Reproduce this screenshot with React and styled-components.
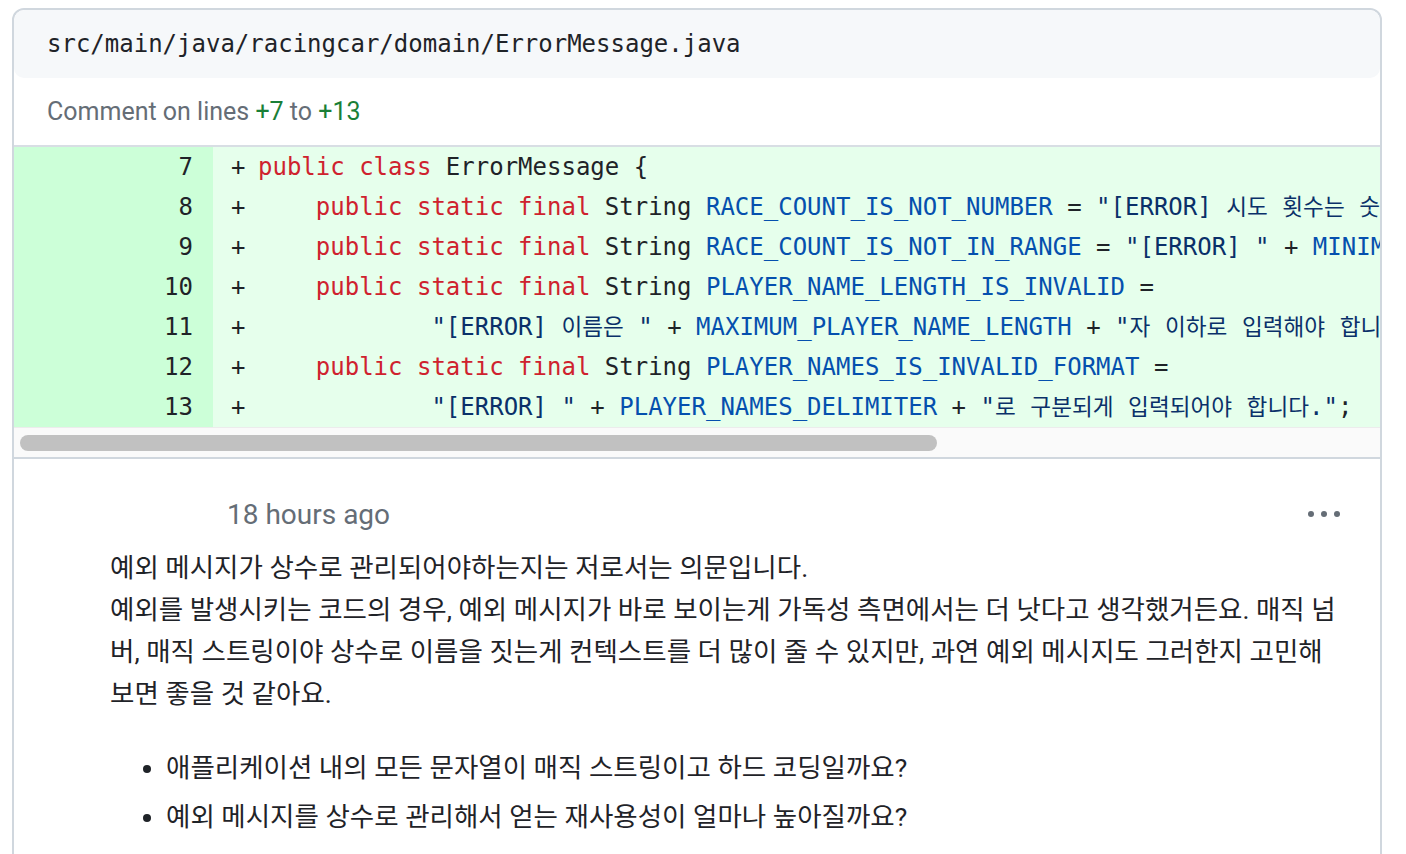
import React from 'react';
import styled, { createGlobalStyle } from 'styled-components';

const GlobalStyle = createGlobalStyle`
  body {
    margin: 0;
    background: #fff;
    font-family: Roboto, "Noto Sans CJK KR", sans-serif;
    color: #1f2328;
  }
`;

const Page = styled.div`
  padding: 8px 0 0 12px;
`;

const Card = styled.div`
  width: 1370px;
  box-sizing: border-box;
  border: 2px solid #d0d7de;
  border-radius: 12px;
  overflow: hidden;
  background: #fff;
`;

const FileHeader = styled.div`
  height: 68px;
  display: flex;
  align-items: center;
  padding: 0 33px;
  background: #f6f8fa;
  border-radius: 10px;
  font-family: "DejaVu Sans Mono", monospace;
  font-size: 24px;
  color: #1f2328;
`;

const LinesNote = styled.div`
  height: 67px;
  display: flex;
  align-items: center;
  padding: 0 33px;
  font-size: 25px;
  color: #656d76;
`;

const LineRef = styled.span`
  color: #1a7f37;
`;

const Diff = styled.div`
  border-top: 2px solid #d8dee4;
  border-bottom: 2px solid #d0d7de;
  overflow: hidden;
  font-family: "DejaVu Sans Mono", "Noto Sans CJK KR", monospace;
  font-size: 24px;
`;

const Row = styled.div`
  display: flex;
  height: 40px;
  line-height: 40px;
`;

const LineNum = styled.div`
  flex: 0 0 199px;
  box-sizing: border-box;
  padding-right: 20px;
  text-align: right;
  background: #ccffd8;
  color: #1f2328;
`;

const CodeCell = styled.div`
  flex: 1;
  display: flex;
  padding-left: 18px;
  background: #e6ffec;
  white-space: pre;
  color: #1f2328;
`;

const Marker = styled.span`
  flex: 0 0 27px;
`;

const Kw = styled.span`
  color: #cf222e;
`;

const Const = styled.span`
  color: #0550ae;
`;

const Str = styled.span`
  color: #0a3069;
`;

// hangul inside code is narrower than the mono cell in the original
const Ko = styled.span`
  font-size: 22.6px;
  word-spacing: 1px;
`;

const ScrollTrack = styled.div`
  height: 29px;
  display: flex;
  align-items: center;
  padding-left: 6px;
  background: #fafafa;
  border-top: 1px solid #ececec;
`;

const ScrollThumb = styled.div`
  width: 917px;
  height: 16px;
  border-radius: 8px;
  background: #c1c1c1;
`;

const Comment = styled.div`
  padding: 34px 34px 40px 0;
`;

const CommentHeader = styled.div`
  display: flex;
  align-items: center;
  justify-content: space-between;
  height: 42px;
  padding-left: 213px;
  padding-right: 6px;
`;

const TimeAgo = styled.span`
  font-size: 28px;
  color: #656d76;
`;

const KebabButton = styled.button`
  border: none;
  background: none;
  padding: 0;
  display: flex;
  color: #656d76;
  cursor: pointer;
`;

const Body = styled.div`
  margin: 12px 0 0 96px;
  width: 1236px;
  font-size: 26.5px;
  line-height: 42px;
  color: #1f2328;

  p {
    margin: 0 0 32px;
  }
`;

const List = styled.ul`
  margin: 0;
  padding-left: 56px;

  li + li {
    margin-top: 7px;
  }
`;

const lines = [
  {
    n: 7,
    code: (
      <>
        <Kw>public</Kw> <Kw>class</Kw> ErrorMessage {'{'}
      </>
    ),
  },
  {
    n: 8,
    code: (
      <>
        {'    '}<Kw>public</Kw> <Kw>static</Kw> <Kw>final</Kw> String <Const>RACE_COUNT_IS_NOT_NUMBER</Const> ={' '}
        <Str>"[ERROR] <Ko>시도 횟수는 숫자여야 합니다</Ko>."</Str>;
      </>
    ),
  },
  {
    n: 9,
    code: (
      <>
        {'    '}<Kw>public</Kw> <Kw>static</Kw> <Kw>final</Kw> String <Const>RACE_COUNT_IS_NOT_IN_RANGE</Const> ={' '}
        <Str>"[ERROR] "</Str> + <Const>MINIMUM_RACE_COUNT</Const> + <Str>"<Ko>회 이상</Ko> "</Str>;
      </>
    ),
  },
  {
    n: 10,
    code: (
      <>
        {'    '}<Kw>public</Kw> <Kw>static</Kw> <Kw>final</Kw> String <Const>PLAYER_NAME_LENGTH_IS_INVALID</Const> =
      </>
    ),
  },
  {
    n: 11,
    code: (
      <>
        {'            '}<Str>"[ERROR] <Ko>이름은</Ko> "</Str> + <Const>MAXIMUM_PLAYER_NAME_LENGTH</Const> +{' '}
        <Str>"<Ko>자 이하로 입력해야 합니다</Ko>."</Str>;
      </>
    ),
  },
  {
    n: 12,
    code: (
      <>
        {'    '}<Kw>public</Kw> <Kw>static</Kw> <Kw>final</Kw> String <Const>PLAYER_NAMES_IS_INVALID_FORMAT</Const> =
      </>
    ),
  },
  {
    n: 13,
    code: (
      <>
        {'            '}<Str>"[ERROR] "</Str> + <Const>PLAYER_NAMES_DELIMITER</Const> +{' '}
        <Str>"<Ko>로 구분되게 입력되어야 합니다</Ko>."</Str>;
      </>
    ),
  },
];

const KebabIcon = () => (
  <svg width="32" height="8" viewBox="0 0 32 8" fill="currentColor" aria-hidden="true">
    <circle cx="3" cy="4" r="3" />
    <circle cx="16" cy="4" r="3" />
    <circle cx="29" cy="4" r="3" />
  </svg>
);

const App = () => (
  <Page>
    <GlobalStyle />
    <Card>
      <FileHeader>src/main/java/racingcar/domain/ErrorMessage.java</FileHeader>
      <LinesNote>
        Comment on lines&nbsp;<LineRef>+7</LineRef>&nbsp;to&nbsp;<LineRef>+13</LineRef>
      </LinesNote>
      <Diff>
        {lines.map(line => (
          <Row key={line.n}>
            <LineNum>{line.n}</LineNum>
            <CodeCell>
              <Marker>+</Marker>
              <span>{line.code}</span>
            </CodeCell>
          </Row>
        ))}
        <ScrollTrack>
          <ScrollThumb />
        </ScrollTrack>
      </Diff>
      <Comment>
        <CommentHeader>
          <TimeAgo>18 hours ago</TimeAgo>
          <KebabButton aria-label="Show options">
            <KebabIcon />
          </KebabButton>
        </CommentHeader>
        <Body>
          <p>
            예외 메시지가 상수로 관리되어야하는지는 저로서는 의문입니다.
            <br />
            예외를 발생시키는 코드의 경우, 예외 메시지가 바로 보이는게 가독성 측면에서는 더 낫다고 생각했거든요. 매직 넘버, 매직 스트링이야 상수로 이름을 짓는게 컨텍스트를 더 많이 줄 수 있지만, 과연 예외 메시지도 그러한지 고민해보면 좋을 것 같아요.
          </p>
          <List>
            <li>애플리케이션 내의 모든 문자열이 매직 스트링이고 하드 코딩일까요?</li>
            <li>예외 메시지를 상수로 관리해서 얻는 재사용성이 얼마나 높아질까요?</li>
          </List>
        </Body>
      </Comment>
    </Card>
  </Page>
);

export default App;
